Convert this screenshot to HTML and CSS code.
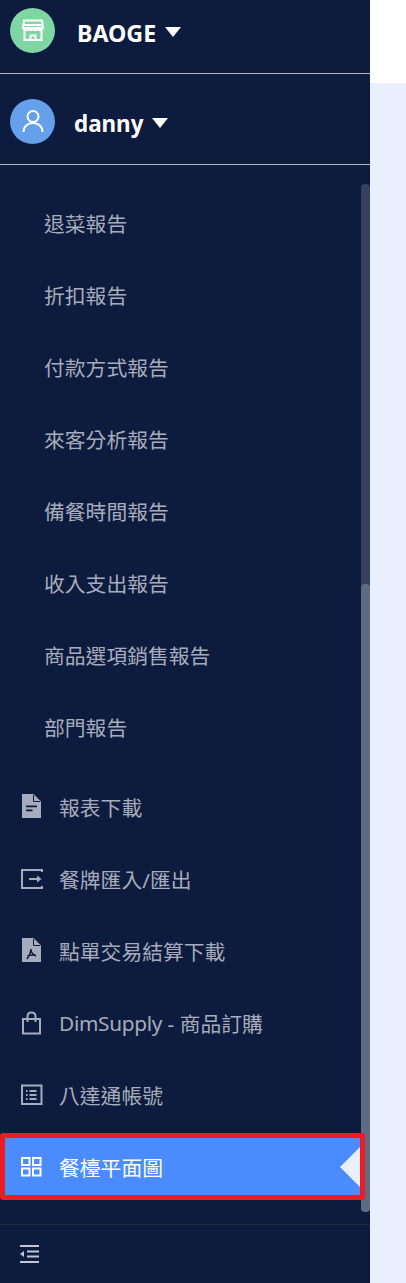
FILE: index.html
```html
<!DOCTYPE html>
<html lang="zh-Hant">
<head>
  <meta charset="UTF-8" />
  <meta name="viewport" content="width=device-width, initial-scale=1.0"/>
  <title>餐檯平面圖</title>
  <link rel="stylesheet" href="styles.css">
</head>
<body>
  <aside class="sidebar">
    <div class="account brand">
      <span class="avatar green">
        <svg width="24" height="24" viewBox="0 0 24 24" fill="none" stroke="#fff" stroke-width="2">
          <path d="M3.500 10.500V21h17V10.500"/>
          <path d="M3 1.500h18l1 7.500H2z"/>
          <path d="M2 6h20"/>
          <path d="M2.500 9.500c1.500 2.400 4 2.400 4.800 0c1 2.400 3.500 2.400 4.700 0c1.200 2.400 3.700 2.400 4.700 0c.8 2.400 3.300 2.400 4.800 0"/>
          <path d="M9.500 21v-4.500h5V21"/>
        </svg>
      </span>
      <span class="account-name">BAOGE</span>
      <span class="caret"></span>
    </div>
    <div class="account user">
      <span class="avatar blue">
        <svg width="24" height="24" viewBox="0 0 24 24" fill="none" stroke="#fff" stroke-width="2">
          <circle cx="12" cy="7.500" r="5.500"/>
          <path d="M2.500 23c0-5.500 4-9 9.500-9s9.500 3.500 9.500 9"/>
        </svg>
      </span>
      <span class="account-name">danny</span>
      <span class="caret"></span>
    </div>

    <nav class="menu">
      <div class="scroll-track"><div class="scroll-thumb"></div></div>

      <div class="submenu">
        <a class="item sub">退菜報告</a>
        <a class="item sub">折扣報告</a>
        <a class="item sub">付款方式報告</a>
        <a class="item sub">來客分析報告</a>
        <a class="item sub">備餐時間報告</a>
        <a class="item sub">收入支出報告</a>
        <a class="item sub">商品選項銷售報告</a>
        <a class="item sub">部門報告</a>
      </div>

      <a class="item">
        <svg class="icon" viewBox="0 1 24 24">
          <path fill="#a6acbb" fill-rule="evenodd" d="M3 0H14.500L22 7.500V24H3zM7 11.500v1.800h11v-1.800zM7 15.500v1.800h6.500v-1.800z"/>
          <path fill="none" stroke="#0d1b3e" d="M14.500 1v6.500H21"/>
        </svg>
        報表下載
      </a>
      <a class="item">
        <svg class="icon" viewBox="0 0 24 24" fill="none" stroke="#a6acbb" stroke-width="2">
          <path d="M23 5V3H3v18h20v-2"/>
          <path d="M10 12h11"/>
          <path d="M18 8.500v7l4.500-3.500z" fill="#a6acbb" stroke="none"/>
        </svg>
        餐牌匯入/匯出
      </a>
      <a class="item">
        <svg class="icon" viewBox="0 1 24 24">
          <path fill="#a6acbb" d="M3 0H14.500L22 7.500V24H3z"/>
          <path fill="none" stroke="#0d1b3e" d="M14.500 1v6.500H21"/>
          <path fill="none" stroke="#0d1b3e" stroke-width="1.500" d="M12 11c0 3 .5 4.500 5 7M12 11.500c-.3 3-1.500 6-4 9.500M8.500 18c2.500-1 5-1.500 8.500-.5"/>
        </svg>
        點單交易結算下載
      </a>
      <a class="item">
        <svg class="icon" viewBox="0 0 24 24" fill="none" stroke="#a6acbb" stroke-width="2">
          <path d="M4 8h17v14.500H4z"/>
          <path d="M8.500 11V5.500C8.500 3 10 1.500 12.500 1.500S16.500 3 16.500 5.500V11"/>
        </svg>
        <span class="tight">DimSupply</span>&nbsp;-&nbsp;商品訂購
      </a>
      <a class="item">
        <svg class="icon" viewBox="0 0 24 24" fill="none" stroke="#a6acbb" stroke-width="2">
          <path d="M3 2.500h19.500V21H3z"/>
          <path d="M10.500 8h7M10.500 12h7M10.500 16h7M7 8h1.500M7 12h1.500M7 16h1.500" stroke-width="1.800"/>
        </svg>
        八達通帳號
      </a>
      <a class="item active">
        <svg class="icon" viewBox="0 0 24 24" fill="none" stroke="#fff" stroke-width="2">
          <path d="M3 3h7.500v7H3zM14 3h7.500v7H14zM3 13.500h7.500v7H3zM14 13.500h7.500v7H14z"/>
        </svg>
        餐檯平面圖
        <span class="notch"></span>
        <span class="highlight"></span>
      </a>
    </nav>

    <div class="collapse">
      <svg width="24" height="24" viewBox="0 0 24 24" fill="none" stroke="#c3c7d1" stroke-width="2">
        <path d="M1 4h19M8 9.500h12M8 14.500h12M1 20h19"/>
        <path d="M1 12l4-3v6z" fill="#c3c7d1" stroke="none"/>
      </svg>
    </div>
  </aside>

  <main class="content">
    <div class="topbar"></div>
  </main>
</body>
</html>
```

FILE: styles.css
```css
* { box-sizing: border-box; }
html, body { height: 100%; }
body { margin: 0; display: flex; height: 1283px; overflow: hidden; background: #e9effd; font-family: "Noto Sans", "Noto Sans CJK TC", sans-serif; }

.sidebar { width: 370px; flex: none; display: flex; flex-direction: column; background: #0d1b3e; }
.account { display: flex; align-items: center; padding-left: 10px; color: #fff; border-bottom: 1px solid #b5b7bd; }
.brand { height: 74px; padding-bottom: 12px; }
.user { height: 91px; padding-top: 4px; }
.avatar { width: 45px; height: 45px; border-radius: 50%; display: flex; align-items: center; justify-content: center; flex: none; }
.green { background: #7ed6a2; }
.blue { background: #669fea; }
.account-name { font-size: 22.4px; font-weight: 700; margin-top: 4px; }
.brand .account-name { margin-left: 22px; font-size: 23.2px; }
.user .account-name { margin-left: 19px; }
.caret { width: 0; height: 0; margin: 3px 0 0 9px; border-left: 8px solid transparent; border-right: 8px solid transparent; border-top: 10px solid #fff; }

.menu { position: relative; flex: 1; min-height: 0; padding-top: 29px; overflow: hidden; }
.scroll-track { position: absolute; z-index: 1; top: 19px; right: 0; width: 9px; height: 1028px; background: #363f5d; border-radius: 4px; }
.scroll-thumb { margin-top: 400px; height: 628px; background: #5f6a85; border-radius: 4px; }

.submenu { padding-bottom: 8px; }
.item { position: relative; display: flex; align-items: center; height: 58px; margin-bottom: 14px; padding-left: 19px; font-size: 20.8px; color: #a6acbb; }
.item.sub { padding-left: 44px; }
.tight { letter-spacing: -0.3px; }
.icon { width: 24px; height: 24px; flex: none; margin-right: 16px; overflow: visible; }
.active { background: #4a8cff; color: #fff; }
.notch { position: absolute; right: 0; top: 9px; width: 0; height: 0; border-top: 20px solid transparent; border-bottom: 20px solid transparent; border-right: 20px solid #e9effd; margin-right: 10px; }
.highlight { position: absolute; z-index: 2; left: 0; top: -5px; width: 365px; height: 67px; border: 5px solid #ed1c24; border-radius: 3px; }

.collapse { height: 59px; display: flex; align-items: center; padding-left: 19px; border-top: 1px solid #1d2947; }

.content { flex: 1; }
.topbar { height: 83px; background: #fff; }
```
